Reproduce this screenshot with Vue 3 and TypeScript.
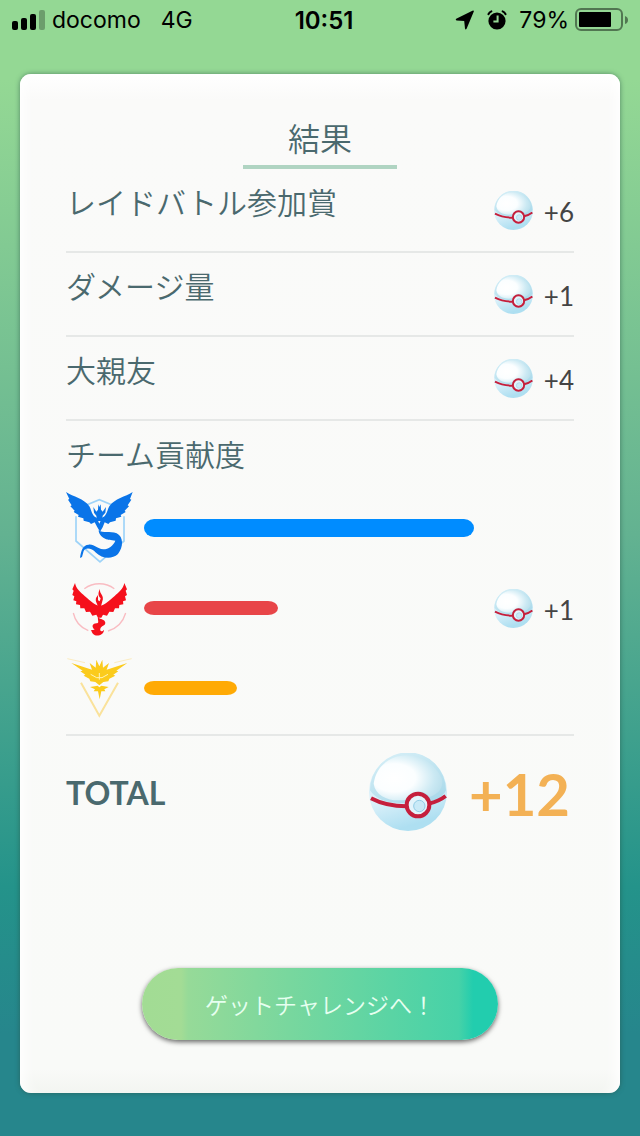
<script setup lang="ts">
import { defineComponent, h } from 'vue'

interface Reward {
  label: string
  amount: number
}

interface Team {
  id: 'mystic' | 'valor' | 'instinct'
  name: string
  share: number
  amount?: number
}

const rewards: Reward[] = [
  { label: 'レイドバトル参加賞', amount: 6 },
  { label: 'ダメージ量', amount: 1 },
  { label: '大親友', amount: 4 },
]

const teams: Team[] = [
  { id: 'mystic', name: 'ミスティック', share: 100 },
  { id: 'valor', name: 'ヴァーラー', share: 40.6, amount: 1 },
  { id: 'instinct', name: 'インスティンクト', share: 28.2 },
]

const total = 12

const PremierBall = defineComponent({
  setup() {
    return () =>
      h('svg', { viewBox: '0 0 234 234', 'aria-hidden': 'true' }, [
        h('circle', { cx: 117, cy: 117, r: 117, fill: 'url(#ball-base)' }),
        h('path', {
          d: 'M3 112 A114 114 0 0 1 231 112 C222 130 204 144 180 147 C166 118 130 118 116 149 C70 154 26 146 3 112Z',
          fill: 'url(#ball-lid)',
        }),
        h('path', {
          d: 'M14 92 C22 36 66 8 112 7 C160 7 200 36 218 76 C226 104 206 124 182 132 C164 108 128 112 112 140 C66 148 20 132 14 92Z',
          fill: 'url(#ball-shine)',
        }),
        h('path', {
          d: 'M6 136 C40 154 76 160 112 160 M180 152 C200 147 216 140 230 129',
          fill: 'none',
          stroke: '#c51f3c',
          'stroke-width': 12,
        }),
        h('circle', { cx: 147, cy: 156, r: 34, fill: '#e3f4fb', stroke: '#c51f3c', 'stroke-width': 12 }),
        h('circle', { cx: 151, cy: 159, r: 17, fill: '#c9eaf7', stroke: '#92cde6', 'stroke-width': 3 }),
      ])
  },
})
</script>

<template>
  <div class="screen">
    <svg class="defs" aria-hidden="true">
      <defs>
        <linearGradient id="ball-base" x1="0" y1="0" x2="0.3" y2="1">
          <stop offset="0" stop-color="#d5eff8" />
          <stop offset="0.6" stop-color="#dcf1fa" />
          <stop offset="1" stop-color="#aedff1" />
        </linearGradient>
        <linearGradient id="ball-lid" x1="0.2" y1="0" x2="0.8" y2="1">
          <stop offset="0" stop-color="#d6eff7" />
          <stop offset="1" stop-color="#a9d9ea" />
        </linearGradient>
        <radialGradient id="ball-shine" cx="0.3" cy="0.5" r="0.78">
          <stop offset="0" stop-color="#ffffff" />
          <stop offset="0.4" stop-color="#fbfeff" />
          <stop offset="0.75" stop-color="#cbe9f3" />
          <stop offset="1" stop-color="#b4dcea" />
        </radialGradient>
      </defs>
    </svg>

    <header class="status">
      <div class="status-group">
        <svg class="signal" viewBox="0 0 34 20" aria-hidden="true">
          <rect x="0" y="11" width="6" height="9" rx="2" />
          <rect x="9" y="8" width="6" height="12" rx="2" />
          <rect x="18" y="4" width="6" height="16" rx="2" />
          <rect x="27" y="0" width="6" height="20" rx="2" opacity=".27" />
        </svg>
        <span class="carrier">docomo</span>
        <span class="network">4G</span>
      </div>
      <time class="time">10:51</time>
      <div class="status-group">
        <svg class="location" viewBox="0 0 20 20" aria-hidden="true">
          <path d="M18.8 1.4 11.6 18.8Q10.4 20.4 10 18.4L9.2 11 1.6 10.4Q.1 9.8 1.2 8.8L17.4 .8Q19.2.1 18.8 1.4Z" />
        </svg>
        <svg class="alarm" viewBox="0 0 20 20" aria-hidden="true">
          <circle cx="10" cy="11" r="8.6" />
          <path d="M1.4 4.2Q2.4 2.2 4.4 1.4M18.6 4.2Q17.6 2.2 15.6 1.4" fill="none" stroke="#000" stroke-width="2" stroke-linecap="round" />
          <path class="hands" d="M10.6 5.6V11.6H6.4" />
        </svg>
        <span class="percent">79%</span>
        <svg class="battery" viewBox="0 0 54 24" aria-hidden="true">
          <rect x="1" y="1" width="46" height="21" rx="5" fill="none" stroke="#000" stroke-width="2" opacity=".45" />
          <rect x="4" y="4" width="32" height="15" rx="1" />
          <path d="M50 8Q53 9 53 12T50 16Z" opacity=".45" />
        </svg>
      </div>
    </header>

    <main class="card">
      <h1 class="title">結果</h1>

      <ul class="rewards">
        <li v-for="reward in rewards" :key="reward.label" class="row">
          <span class="label">{{ reward.label }}</span>
          <span class="reward"><PremierBall class="ball" /><span class="amount">+{{ reward.amount }}</span></span>
        </li>
      </ul>

      <section class="teams">
        <h2 class="label heading">チーム貢献度</h2>
        <div v-for="team in teams" :key="team.id" class="team" :class="team.id">
          <svg v-if="team.id === 'mystic'" class="emblem tall" viewBox="48 36 204 222" role="img" :aria-label="team.name">
            <path d="M78 112V186L150 249 222 186V112M104 80 148 62 192 80" fill="none" stroke="#9ed3f8" stroke-width="5" />
            <g fill="#0a74e8">
              <path d="M48 39C70 54 102 58 118 82 125 94 126 112 140 116L148 134 156 116C170 112 171 94 178 82 194 58 226 54 248 39L240 60 244 62 233 79 237 82 224 95 227 99 212 108 214 113 198 118 197 125 180 130 175 135 164 130 158 145 150 158 142 145 134 130 123 135 118 130 101 125 100 118 84 113 86 108 71 99 74 95 61 82 65 79 54 62 58 60Z" />
              <path d="M130 84 139 98 144 92 145 76 148 84 152 76 153 92 158 98 168 84 166 101 158 110 156 126H141L139 110 132 101Z" />
              <path d="M146 154C158 163 180 156 200 163 222 174 220 205 204 225 185 242 155 238 138 221 125 208 108 204 101 216L96 234 90 237C93 215 98 198 116 197 134 195 140 210 160 211 176 211 189 201 196 185 184 182 171 184 160 176 149 169 146 160 146 154Z" />
            </g>
          </svg>
          <svg v-else-if="team.id === 'valor'" class="emblem" viewBox="48 12 204 204" role="img" :aria-label="team.name">
            <path d="M103 56A76 76 0 0 1 193 56M70 129Q78 167 115 182M227 129Q215 171 174 183" fill="none" stroke="#f9bcc2" stroke-width="4" />
            <g fill="#f5101c">
              <path d="M75 39C78 57 92 66 104 78 121 93 134 105 149 108 164 105 177 93 194 78 206 66 220 57 223 39L231 58 227 62 231 75 225 79 228 91 219 94 220 103 208 105 207 115 195 115 190 126 178 125 171 137 159 134 154 143H144L139 134 127 137 120 125 108 126 103 115 91 115 90 105 78 103 79 94 70 91 73 79 67 75 71 62 67 58Z" />
              <path d="M149 57C149 73 164 77 157 94 155 102 154 103 153 112H144C143 101 135 96 138 84L144 75 144 91 149 94 152 85C143 77 145 68 149 57Z" />
              <path d="M144 140C151 151 164 145 166 158 166 168 153 166 151 176 149 183 155 187 162 179 162 192 148 199 135 196 124 190 126 183 122 181L134 179C122 169 129 159 141 160 149 158 142 150 144 140Z" />
            </g>
          </svg>
          <svg v-else class="emblem" viewBox="48 27 204 204" role="img" :aria-label="team.name">
            <g fill="none" stroke="#fae29b">
              <path d="M93 113 148 212 204 113" stroke-width="6" />
              <path d="M52 41 105 53M245 41 193 53" stroke-width="3" stroke="#fcecc0" />
            </g>
            <g fill="#fbcb1c">
              <path d="M64 54 126 74 119 54 137 68 139 44 148 64 157 44 159 68 177 54 170 74 232 54 199 77 205 79 190 89 196 92 178 101 175 109 160 111 148 121 136 111 121 109 118 101 101 92 106 89 91 79 98 77Z" />
              <path d="M120 126 143 122 148 127 154 122 176 126 163 133 166 139 154 139 149 163 144 139 131 139 135 133Z" />
            </g>
            <path d="M148 84V104M122 88 140 98H156L174 88" fill="none" stroke="#fff4b8" stroke-width="3" />
          </svg>

          <div class="track">
            <div class="bar" :style="{ width: team.share + '%' }"></div>
          </div>
          <span class="reward">
            <template v-if="team.amount"><PremierBall class="ball" /><span class="amount">+{{ team.amount }}</span></template>
          </span>
        </div>
      </section>

      <section class="total">
        <h2 class="total-label">TOTAL</h2>
        <PremierBall class="total-ball" />
        <span class="total-amount">+{{ total }}</span>
      </section>

      <button type="button" class="next">ゲットチャレンジへ！</button>
    </main>
  </div>
</template>

<style>
body {
  margin: 0;
}
</style>

<style scoped>
.screen {
  box-sizing: border-box;
  min-height: 100vh;
  display: flex;
  flex-direction: column;
  font-family: Lato, "Noto Sans CJK JP", sans-serif;
  color: #4a696e;
  background: linear-gradient(#94d894 0, #94d894 7%, #63b291 47%, #24938a 78%, #26868c 91%, #26868c 100%);
}

.defs {
  position: absolute;
  width: 0;
  height: 0;
}

.status {
  display: flex;
  align-items: center;
  justify-content: space-between;
  height: 40px;
  padding: 0 11px 0 12px;
  font-family: Inter, "Liberation Sans", sans-serif;
  font-size: 23px;
  color: #000;
}

.status-group {
  display: flex;
  align-items: center;
}

.signal {
  width: 34px;
  height: 20px;
  margin-right: 6px;
}

.network {
  margin-left: 20px;
}

.time {
  font-size: 24px;
  font-weight: 600;
}

.location {
  width: 20px;
  height: 20px;
  margin-right: 12px;
}

.alarm {
  width: 20px;
  height: 20px;
  margin-right: 12px;
}

.hands {
  fill: none;
  stroke: #94d894;
  stroke-width: 2;
}

.battery {
  width: 54px;
  height: 24px;
  margin-left: 6px;
}

.card {
  flex: 1;
  display: flex;
  flex-direction: column;
  margin: 34px 20px 43px;
  padding: 45px 46px 53px;
  border-radius: 11px;
  background: linear-gradient(#fff 0, #fafaf9 26px, #f9faf8 calc(100% - 24px), #f3f5f1 100%);
  box-shadow: 0 0 5px rgba(40, 80, 70, 0.6), inset 14px 0 14px -10px #fff, inset -14px 0 14px -10px #fff;
}

.title {
  align-self: center;
  min-width: 154px;
  margin: 0;
  padding-bottom: 6px;
  border-bottom: 4px solid #b0d4c2;
  font-size: 32px;
  line-height: 40px;
  font-weight: 350;
  text-align: center;
}

.rewards {
  margin: 0;
  padding: 0;
  list-style: none;
}

.row {
  display: flex;
  align-items: center;
  justify-content: space-between;
  height: 82px;
  border-bottom: 2px solid #e6e8e7;
}

.label {
  font-size: 30px;
  line-height: 40px;
  font-weight: 350;
}

.row .label {
  padding-bottom: 16px;
}

.reward {
  display: flex;
  align-items: center;
  justify-content: space-between;
  width: 80px;
  font-size: 26px;
  color: #444;
}

.amount {
  padding-top: 3px;
}

.ball {
  width: 39px;
  height: 39px;
}

.teams {
  padding-bottom: 6px;
  border-bottom: 2px solid #e6e8e7;
}

.heading {
  margin: 0;
  padding: 13px 0 14px;
}

.team {
  display: flex;
  align-items: center;
  height: 80px;
}

.emblem {
  width: 68px;
  height: 68px;
}

.emblem.tall {
  height: 74px;
}

.track {
  flex: 1;
  margin: 0 20px 0 10px;
}

.bar {
  height: 14px;
  border-radius: 10px / 50%;
}

.mystic .bar {
  height: 18px;
  background: #008cff;
}

.valor .bar {
  background: #e84548;
}

.instinct .bar {
  background: #ffaa05;
}

.total {
  display: flex;
  align-items: center;
  height: 112px;
}

.total-label {
  flex: 1;
  margin: 0;
  font-size: 32px;
  font-weight: 700;
}

.total-ball {
  width: 78px;
  height: 78px;
  margin-right: 22px;
}

.total-amount {
  margin-right: 4px;
  padding-top: 3px;
  font-size: 58px;
  line-height: 72px;
  font-weight: 700;
  color: #f3b155;
}

.next {
  align-self: center;
  width: 70%;
  height: 72px;
  margin-top: auto;
  padding: 0;
  border: 0;
  border-radius: 36px;
  background: linear-gradient(90deg, #a2dc94 0, #a3dc95 11%, #96da98 13%, #46d2a8 89%, #22cdae 93%);
  box-shadow: 0 2px 5px rgba(0, 0, 0, 0.6);
  font-family: "Noto Sans CJK JP", sans-serif;
  font-size: 23px;
  font-weight: 350;
  color: #e6fff0;
}
</style>
